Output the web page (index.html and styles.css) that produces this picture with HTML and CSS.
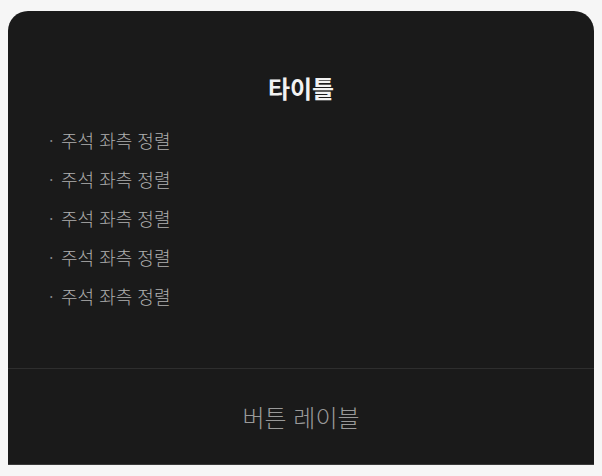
FILE: index.html
```html
<!DOCTYPE html>
<html lang="ko">
<head>
  <meta charset="UTF-8">
  <meta name="viewport" content="width=device-width, initial-scale=1.0">
  <title>다이얼로그</title>
  <link rel="stylesheet" href="styles.css">
</head>
<body>
  <div class="dialog">
    <div class="dialog-body">
      <h2 class="dialog-title">타이틀</h2>
      <ul class="notes">
        <li>주석 좌측 정렬</li>
        <li>주석 좌측 정렬</li>
        <li>주석 좌측 정렬</li>
        <li>주석 좌측 정렬</li>
        <li>주석 좌측 정렬</li>
      </ul>
    </div>
    <button class="dialog-btn" type="button">버튼 레이블</button>
  </div>
</body>
</html>
```

FILE: styles.css
```css
/* 기본 */
body {
  margin: 0;
  padding: 11px 8px 0;
  background-color: #f6f6f6;
  font-family: "Noto Sans CJK KR", "Noto Sans", sans-serif;
}

.dialog {
  background-color: #1a1a1a;
  border-radius: 20px 20px 0 0;
  border-bottom: 1px solid #3a3a3a;
  overflow: hidden;
}

.dialog-body {
  padding: 61px 41px 52px;
}

/* 타이틀 */
.dialog-title {
  margin: 0 0 17px;
  text-align: center;
  font-size: 24px;
  line-height: 32px;
  font-weight: 700;
  color: #f2f2f2;
}

/* 주석 리스트 */
.notes {
  list-style: none;
  margin: 0;
  padding: 0;
}

.notes li {
  display: flex;
  font-size: 18px;
  line-height: 39px;
  font-weight: 300;
  color: #b0b0b0;
}

.notes li::before {
  content: "·";
  width: 12px;
  color: #8a8a8a;
}

/* 버튼 */
.dialog-btn {
  display: block;
  width: 100%;
  height: 96px;
  border: none;
  border-top: 1px solid #2e2e2e;
  background: none;
  font-family: inherit;
  font-size: 24px;
  font-weight: 300;
  color: #999999;
  cursor: pointer;
}
```
